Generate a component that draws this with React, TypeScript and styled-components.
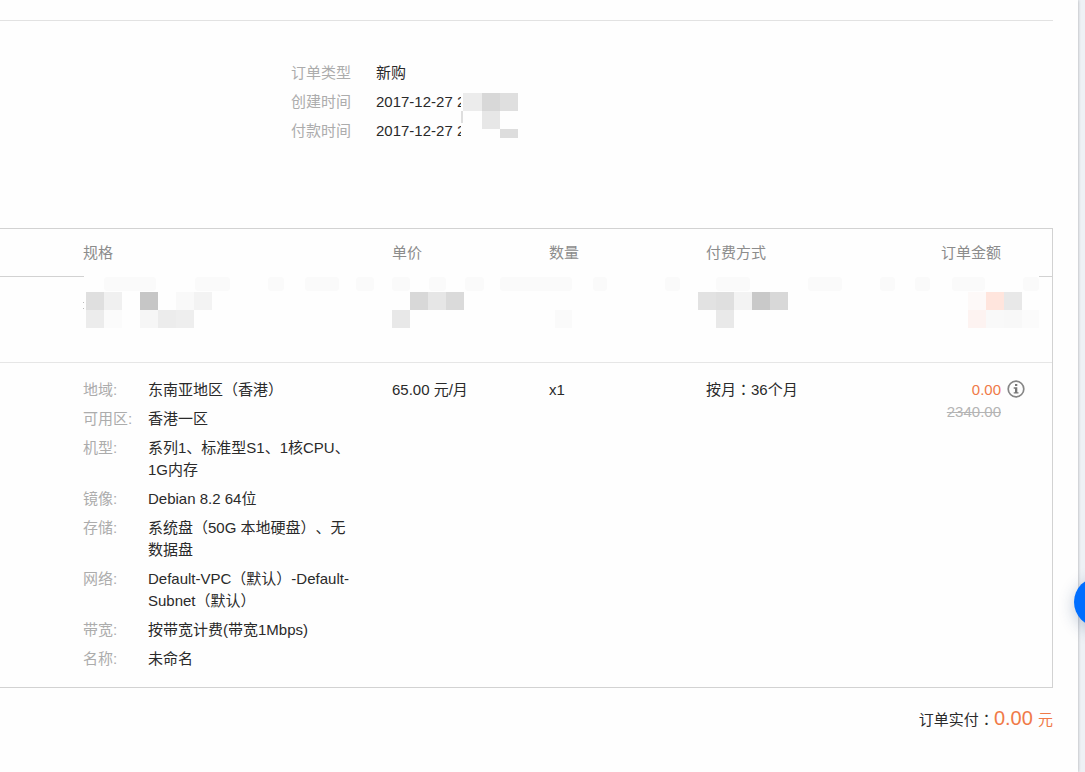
import React from "react";
import styled, { createGlobalStyle } from "styled-components";

const GlobalStyle = createGlobalStyle`
  * { box-sizing: border-box; }
  html, body, #root { min-height: 100vh; }
  body {
    margin: 0;
    overflow-x: hidden;
    background: #eef1f5;
    color: #2a2a2a;
    font-family: "Liberation Sans", "Noto Sans CJK SC", sans-serif;
    font-size: 15px;
    line-height: 22px;
    text-spacing-trim: space-all;
  }
  #root { display: flex; }
`;

const Page = styled.main`
  flex: 1;
  min-width: 0;
  margin-right: 7px;
  padding: 20px 25px 40px 0;
  background: #fefefe;
  box-shadow: 0 0 3px rgba(0, 0, 0, 0.3);
`;

const Summary = styled.section`
  border-top: 1px solid #e2e2e2;
  padding: 41px 0 86px 291px;
`;

const Fields = styled.dl<{ $label: number; $width?: number }>`
  display: grid;
  grid-template-columns: ${(p) => p.$label}px 1fr;
  row-gap: 7px;
  margin: 0;
  max-width: ${(p) => (p.$width ? `${p.$width}px` : "none")};
`;

const Label = styled.dt`
  color: #acacac;
`;

const Value = styled.dd`
  margin: 0;
`;

const Masked = styled.span`
  position: relative;
  z-index: 1;
  white-space: nowrap;
`;

const TimeMosaic = styled.svg`
  position: absolute;
  left: 85px;
  top: 0;
`;

const OrderBox = styled.section`
  border: 1px solid #d2d2d2;
  border-left: 0;
`;

const Table = styled.table`
  width: 100%;
  table-layout: fixed;
  border-collapse: separate;
  border-spacing: 0;
`;

const Head = styled.th<{ $first?: boolean; $right?: boolean }>`
  height: 48px;
  padding: 0;
  padding-left: ${(p) => (p.$first ? 83 : 0)}px;
  padding-right: ${(p) => (p.$right ? 51 : 0)}px;
  border-bottom: 1px solid #d2d2d2;
  color: #8c8c8c;
  font-weight: 400;
  text-align: ${(p) => (p.$right ? "right" : "left")};
`;

const MaskCell = styled.td`
  position: relative;
  height: 86px;
  padding: 0;
  border-bottom: 1px solid #e6e6e6;
`;

const RowMosaic = styled.svg`
  position: absolute;
  left: 83px;
  top: -3px;
`;

const Cell = styled.td<{ $first?: boolean; $right?: boolean }>`
  padding: 16px 0 17px;
  padding-left: ${(p) => (p.$first ? 83 : 0)}px;
  padding-right: ${(p) => (p.$right ? 51 : 0)}px;
  text-align: ${(p) => (p.$right ? "right" : "left")};
  vertical-align: top;
`;

const Colon = styled.span`
  font-family: "Noto Sans CJK TC", sans-serif;
  line-height: 1;
`;

const Amount = styled.div`
  position: relative;
  color: #f07a48;
`;

const InfoButton = styled.button`
  position: absolute;
  left: 100%;
  top: 1px;
  display: flex;
  margin-left: 6px;
  padding: 0;
  border: 0;
  background: none;
  cursor: pointer;
`;

const OldPrice = styled.del`
  color: #b4b4b4;
`;

const Total = styled.p`
  display: flex;
  justify-content: flex-end;
  align-items: baseline;
  margin: 19px 0 0;
`;

const TotalPrice = styled.span`
  color: #f07a48;
`;

const TotalNumber = styled.strong`
  margin-right: 1px;
  font-size: 20px;
  font-weight: 400;
`;

const HelpButton = styled.button`
  position: fixed;
  top: 577px;
  right: -39px;
  width: 50px;
  height: 50px;
  padding: 0;
  border: 0;
  border-radius: 50%;
  background: #006eff;
  box-shadow: 0 4px 16px rgba(30, 60, 110, 0.28);
  cursor: pointer;
`;

type Block = [x: number, y: number, width: number, height: number, fill: string];

const timeBlocks: Block[] = [
  [2, 0, 19, 18, "#ececec"],
  [21, 0, 18, 18, "#d8d8d8"],
  [39, 0, 18, 18, "#dfdfdf"],
  [0, 18, 2, 12, "#dedede"],
  [21, 18, 18, 18, "#e7e7e7"],
  [39, 36, 18, 9, "#dddddd"],
];

const rowBlocks: Block[] = [
  [3, 18, 18, 18, "#dfdfdf"],
  [21, 18, 18, 18, "#f0f0f0"],
  [57, 18, 18, 18, "#c6c6c6"],
  [93, 18, 18, 18, "#f9f9f9"],
  [111, 18, 18, 18, "#f3f3f3"],
  [3, 36, 18, 18, "#ececec"],
  [21, 36, 18, 18, "#fbfbfb"],
  [57, 36, 18, 18, "#f6f6f6"],
  [75, 36, 18, 18, "#ececec"],
  [93, 36, 18, 18, "#eeeeee"],
  [0, 28, 1, 1, "#bbbbbb"],
  [0, 34, 1, 1, "#bbbbbb"],
  [327, 18, 18, 18, "#d8d8d8"],
  [345, 18, 18, 18, "#e6e6e6"],
  [363, 18, 18, 18, "#dadada"],
  [309, 36, 18, 18, "#e8e8e8"],
  [472, 36, 17, 18, "#fafafa"],
  [615, 18, 18, 18, "#e2e2e2"],
  [633, 18, 18, 18, "#dfdfdf"],
  [651, 18, 18, 18, "#f3f3f3"],
  [669, 18, 18, 18, "#c9c9c9"],
  [687, 18, 18, 18, "#d8d8d8"],
  [633, 36, 18, 18, "#e9e9e9"],
  [885, 18, 18, 18, "#fdf9f8"],
  [903, 18, 18, 18, "#ffe5dd"],
  [921, 18, 18, 18, "#e8e8e8"],
  [885, 36, 18, 18, "#fdf3f1"],
  [903, 36, 18, 18, "#f9f9f9"],
  [921, 36, 18, 18, "#f8f8f8"],
  [939, 36, 17, 18, "#fbfbfb"],
];

const faintRuns: [x: number, width: number][] = [
  [21, 52], [112, 35], [185, 16], [222, 34], [273, 18], [309, 18],
  [346, 17], [382, 19], [417, 72], [510, 14], [582, 15], [633, 34],
  [725, 34], [797, 15], [832, 15], [869, 33], [940, 16],
];

const specs: [string, string][] = [
  ["地域", "东南亚地区（香港）"],
  ["可用区", "香港一区"],
  ["机型", "系列1、标准型S1、1核CPU、1G内存"],
  ["镜像", "Debian 8.2 64位"],
  ["存储", "系统盘（50G 本地硬盘）、无数据盘"],
  ["网络", "Default-VPC（默认）-Default-Subnet（默认）"],
  ["带宽", "按带宽计费(带宽1Mbps)"],
  ["名称", "未命名"],
];

const Blocks = ({ items }: { items: Block[] }) => (
  <>
    {items.map(([x, y, w, h, fill]) => (
      <rect key={`${x}-${y}`} x={x} y={y} width={w} height={h} fill={fill} />
    ))}
  </>
);

export default function App() {
  return (
    <>
      <GlobalStyle />
      <Page>
        <Summary>
          <Fields $label={85}>
            <Label>订单类型</Label>
            <Value>新购</Value>
            <Label>创建时间</Label>
            <Value>
              <Masked>
                2017-12-27 2
                <TimeMosaic width="57" height="45" aria-hidden="true">
                  <rect width="57" height="45" fill="#fefefe" />
                  <Blocks items={timeBlocks} />
                </TimeMosaic>
              </Masked>
            </Value>
            <Label>付款时间</Label>
            <Value>2017-12-27 2</Value>
          </Fields>
        </Summary>

        <OrderBox>
          <Table>
            <colgroup>
              <col style={{ width: 392 }} />
              <col style={{ width: 157 }} />
              <col style={{ width: 157 }} />
              <col style={{ width: 157 }} />
              <col />
            </colgroup>
            <thead>
              <tr>
                <Head $first>规格</Head>
                <Head>单价</Head>
                <Head>数量</Head>
                <Head>付费方式</Head>
                <Head $right>订单金额</Head>
              </tr>
            </thead>
            <tbody>
              <tr>
                <MaskCell colSpan={5}>
                  <RowMosaic width="956" height="54" aria-hidden="true">
                    <rect x="1" width="955" height="54" fill="#fefefe" />
                    {faintRuns.map(([x, width]) => (
                      <rect key={x} x={x} y="3" width={width} height="14" rx="3" fill="#fafafa" />
                    ))}
                    <Blocks items={rowBlocks} />
                  </RowMosaic>
                </MaskCell>
              </tr>
              <tr>
                <Cell $first>
                  <Fields $label={65} $width={270}>
                    {specs.map(([name, value]) => (
                      <React.Fragment key={name}>
                        <Label>{name}:</Label>
                        <Value>{value}</Value>
                      </React.Fragment>
                    ))}
                  </Fields>
                </Cell>
                <Cell>65.00 元/月</Cell>
                <Cell>x1</Cell>
                <Cell>
                  按月<Colon>：</Colon>36个月
                </Cell>
                <Cell $right>
                  <Amount>
                    0.00
                    <InfoButton type="button" aria-label="价格说明">
                      <svg width="18" height="18" viewBox="0 0 18 18" fill="none">
                        <circle cx="9" cy="9" r="7.8" stroke="#868686" strokeWidth="1.7" />
                        <path d="M8 4h2.3v2H8zM6.7 7.3h3.6v4.9h1.2v1.4H6.7v-1.4H8V8.7H6.7z" fill="#777" />
                      </svg>
                    </InfoButton>
                  </Amount>
                  <OldPrice>2340.00</OldPrice>
                </Cell>
              </tr>
            </tbody>
          </Table>
        </OrderBox>

        <Total>
          <span>
            订单实付<Colon>：</Colon>
          </span>
          <TotalPrice>
            <TotalNumber>0.00</TotalNumber> 元
          </TotalPrice>
        </Total>
      </Page>
      <HelpButton type="button" aria-label="在线咨询" />
    </>
  );
}
